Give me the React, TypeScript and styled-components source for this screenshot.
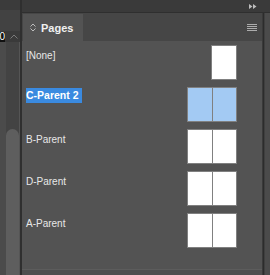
import React from "react";
import styled, { createGlobalStyle } from "styled-components";

const Global = createGlobalStyle`
  html, body { margin: 0; padding: 0; background: #535353; }
  #root { width: 270px; height: 275px; overflow: hidden; }
`;

const Frame = styled.div`
  width: 270px;
  height: 275px;
  display: flex;
  font-family: "Liberation Sans", Arial, sans-serif;
  overflow: hidden;
`;

const LeftStrip = styled.div`
  width: 20px;
  display: flex;
  flex-direction: column;
  background: #454545;
`;

const LeftTop = styled.div`
  height: 10px;
  background: #3b3b3b;
`;

const LeftGap = styled.div`
  height: 21px;
  background: #424242;
`;

const FieldRow = styled.div`
  height: 11px;
  display: flex;
  align-items: center;
  background: #3a3a3a;
`;

const Field = styled.div`
  width: 5px;
  height: 10px;
  background: #111;
  color: #fff;
  font-size: 10px;
  line-height: 10px;
  overflow: hidden;
  display: flex;
  justify-content: flex-end;
`;

const Chevron = styled.svg`
  margin-left: 5px;
`;

const TrackArea = styled.div`
  flex: 1;
  display: flex;
`;

const TrackEdge = styled.div`
  width: 6px;
  background: #4b4b4b;
`;

const Track = styled.div`
  flex: 1;
  display: flex;
  flex-direction: column;
  padding-top: 87px;
  background: #434343;
  border-right: 1px solid #555;
`;

const Thumb = styled.div`
  flex: 1;
  background: #5e5e5e;
  border-radius: 7px 7px 0 0;
`;

const Divider = styled.div`
  width: 2px;
  background: #2f2f2f;
`;

const Main = styled.div`
  flex: 1;
  display: flex;
  flex-direction: column;
`;

const TopBar = styled.div`
  height: 12px;
  background: #3a3a3a;
  border-bottom: 1px solid #2f2f2f;
  display: flex;
  justify-content: flex-end;
  align-items: center;
  padding-right: 13px;
`;

const Body = styled.div`
  flex: 1;
  display: flex;
`;

const Panel = styled.div`
  width: 240px;
  display: flex;
  flex-direction: column;
`;

const TabBar = styled.div`
  height: 28px;
  background: #464646;
  display: flex;
  align-items: flex-end;
  justify-content: space-between;
  padding-left: 1px;
  padding-right: 5px;
`;

const Tab = styled.div`
  width: 60px;
  height: 27px;
  background: #535353;
  display: flex;
  align-items: center;
  gap: 5px;
  padding-left: 7px;
  box-sizing: border-box;
  color: #f0f0f0;
  font-weight: bold;
  font-size: 11px;
`;

const MenuIcon = styled.svg`
  align-self: center;
  margin-top: 1px;
`;

const Content = styled.div`
  flex: 1;
  background: #535353;
  display: flex;
  flex-direction: column;
  border-bottom: 1px solid #5c5c5c;
`;

const Footer = styled.div`
  height: 5px;
  background: #4f4f4f;
`;

const Row = styled.div`
  height: 42px;
  display: flex;
  justify-content: space-between;
  align-items: flex-start;
  padding-left: 4px;
  padding-right: 25px;
`;

const Label = styled.div<{ $selected?: boolean }>`
  margin-top: ${(p) => (p.$selected ? 5 : 7)}px;
  height: 15px;
  line-height: 15px;
  font-size: ${(p) => (p.$selected ? 10.5 : 10)}px;
  font-weight: ${(p) => (p.$selected ? "bold" : "normal")};
  color: ${(p) => (p.$selected ? "#ffffff" : "#e8e8e8")};
  background: ${(p) => (p.$selected ? "#3a8ae0" : "transparent")};
  padding-right: ${(p) => (p.$selected ? 3 : 0)}px;
  white-space: nowrap;
`;

const Spread = styled.div`
  margin-top: 4px;
  display: flex;
  border: 1px solid #808080;
  height: 33px;
`;

const Page = styled.div<{ $selected?: boolean }>`
  width: 24px;
  background: ${(p) => (p.$selected ? "#a3caf3" : "#ffffff")};
  & + & {
    width: 23px;
    border-left: 1px solid #808080;
  }
`;

const RightEdge = styled.div`
  width: 8px;
  display: flex;
`;

const EdgeLine = styled.div<{ $w: number; $c: string }>`
  width: ${(p) => p.$w}px;
  background: ${(p) => p.$c};
`;

const rows = [
  { name: "[None]", pages: 1, selected: false },
  { name: "C-Parent 2", pages: 2, selected: true },
  { name: "B-Parent", pages: 2, selected: false },
  { name: "D-Parent", pages: 2, selected: false },
  { name: "A-Parent", pages: 2, selected: false },
];

export default function App() {
  return (
    <>
      <Global />
      <Frame>
        <LeftStrip>
          <LeftTop />
          <LeftGap />
          <FieldRow>
            <Field>0</Field>
            <Chevron width="8" height="5" viewBox="0 0 8 5">
              <path d="M0.5 4.5 L4 1 L7.5 4.5" fill="none" stroke="#7a7a7a" strokeWidth="1" />
            </Chevron>
          </FieldRow>
          <TrackArea>
            <TrackEdge />
            <Track>
              <Thumb />
            </Track>
          </TrackArea>
        </LeftStrip>
        <Divider />
        <Main>
          <TopBar>
            <svg width="8" height="5" viewBox="0 0 8 5">
              <path d="M0 0 L3.5 2.5 L0 5 Z M4 0 L7.5 2.5 L4 5 Z" fill="#bdbdbd" />
            </svg>
          </TopBar>
          <Body>
            <Panel>
              <TabBar>
                <Tab>
                  <svg width="6" height="9" viewBox="0 0 6 9">
                    <path d="M0.5 3.5 L3 1 L5.5 3.5 M0.5 5.5 L3 8 L5.5 5.5" fill="none" stroke="#bdbdbd" strokeWidth="1" />
                  </svg>
                  Pages
                </Tab>
                <MenuIcon width="10" height="7" viewBox="0 0 10 7">
                  <path d="M0 0.5 H10 M0 2.5 H10 M0 4.5 H10 M0 6.5 H10" stroke="#acacac" strokeWidth="1" />
                </MenuIcon>
              </TabBar>
              <Content>
                {rows.map((r) => (
                  <Row key={r.name}>
                    <Label $selected={r.selected}>{r.name}</Label>
                    <Spread>
                      {Array.from({ length: r.pages }).map((_, i) => (
                        <Page key={i} $selected={r.selected} />
                      ))}
                    </Spread>
                  </Row>
                ))}
              </Content>
              <Footer />
            </Panel>
            <RightEdge>
              <EdgeLine $w={1} $c="#3a3a3a" />
              <EdgeLine $w={1} $c="#2c2c2c" />
              <EdgeLine $w={1} $c="#3f3f3f" />
              <EdgeLine $w={5} $c="#4b4b4b" />
            </RightEdge>
          </Body>
        </Main>
      </Frame>
    </>
  );
}
